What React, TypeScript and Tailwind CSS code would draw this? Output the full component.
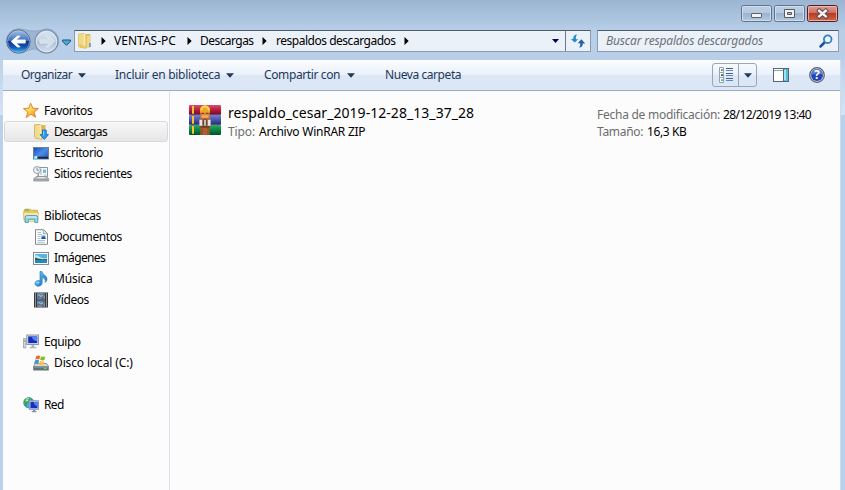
import type { ReactNode } from "react";

type IconProps = { className?: string };

function BackButton() {
  return (
    <svg width="68" height="26" viewBox="0 0 68 26" className="shrink-0">
      <defs>
        <linearGradient id="back" x1="0" y1="0" x2="0" y2="1">
          <stop offset="0" stopColor="#a9c2e6" />
          <stop offset="0.46" stopColor="#3f70bd" />
          <stop offset="0.5" stopColor="#0c3891" />
          <stop offset="0.75" stopColor="#1555b4" />
          <stop offset="1" stopColor="#38c6f4" />
        </linearGradient>
        <linearGradient id="fwd" x1="0" y1="0" x2="0" y2="1">
          <stop offset="0" stopColor="#dbe5f0" />
          <stop offset="0.48" stopColor="#c3d2e3" />
          <stop offset="0.52" stopColor="#adc0d6" />
          <stop offset="1" stopColor="#d3e2f1" />
        </linearGradient>
      </defs>
      <path d="M14.5 .8C20 .8 23 3 30 3S41 .8 42.5 .8A12.2 12.2 0 0 1 42.5 25.2C36 25.2 35 21 30 21S21 25.2 14.5 25.2A12.2 12.2 0 0 1 14.5 .8Z" fill="#8ca6c4" fillOpacity=".65" stroke="#8aa3c0" strokeWidth=".8" />
      <circle cx="14.5" cy="13.5" r="11.6" fill="url(#back)" stroke="#4b628b" strokeWidth="1" />
      <circle cx="14.5" cy="13.5" r="10.9" fill="none" stroke="#d3e3f5" strokeWidth=".6" opacity=".7" />
      <path d="M7.2 13.5L13.3 8H16.2L12.4 11.9H21.3V15.1H12.4L16.2 19H13.3Z" fill="#fff" stroke="#fff" strokeWidth=".7" />
      <circle cx="42.5" cy="13.5" r="11.4" fill="url(#fwd)" stroke="#7f93aa" strokeWidth="1.3" />
      <circle cx="42.5" cy="13.5" r="10.3" fill="none" stroke="#e8f0f8" strokeWidth=".7" />
      <path d="M50.5 13.5L44.5 7.8H41.5L45.5 11.8H36V15.2H45.5L41.5 19.2H44.5Z" fill="#d3dfeb" stroke="#e3ebf3" strokeWidth=".6" />
      <path d="M58.5 12H66.5V13.3L62.5 17.3L58.5 13.3Z" fill="#49acd8" stroke="#254e78" strokeWidth="1" />
    </svg>
  );
}

function FolderIcon({ className }: IconProps) {
  return (
    <svg width="16" height="16" viewBox="0 0 16 16" className={className}>
      <path d="M7 1.5H13V14H7Z" fill="#e4bb4e" stroke="#c99f38" strokeWidth=".5" />
      <path d="M9.5 3L13.7 2.3V13.5L9.5 15Z" fill="#f1d888" />
      <path d="M12 10H13.8V14H12Z" fill="#67a4c6" />
      <path d="M1.5 1L7.5 .5L9.2 2V15.5L3.2 14.4L1.5 13.4Z" fill="#f0da85" stroke="#d7b650" strokeWidth=".6" />
      <path d="M7.3 .8V14.6" stroke="#fff5ca" />
      <path d="M2 11L8.8 13V15.2L3.2 14.2Z" fill="#e1b749" opacity=".55" />
    </svg>
  );
}

function DownloadsIcon() {
  return (
    <svg width="16" height="16" viewBox="0 0 16 16">
      <path d="M6 1H12.5V14H6Z" fill="#e0b84d" />
      <path d="M1.5 .7L7 .4L9 2V15.5L2.8 14.2L1.5 13Z" fill="#f0dc8d" stroke="#c9a545" strokeWidth=".7" />
      <path d="M7.2 1V14.5" stroke="#fff4c5" />
      <path d="M9.5 6H13.2V10.6H15.5L11.3 15.4L7 10.6H9.5Z" fill="#2d9bea" stroke="#186fbd" strokeWidth=".9" />
      <path d="M10.6 7V11.5" fill="none" stroke="#86d1fb" />
    </svg>
  );
}

function StarIcon() {
  return (
    <svg width="16" height="16" viewBox="0 0 16 16">
      <defs>
        <linearGradient id="star" x1="0" y1="0" x2="0.8" y2="1">
          <stop offset="0" stopColor="#fffbd0" />
          <stop offset=".5" stopColor="#ffd557" />
          <stop offset="1" stopColor="#f48a19" />
        </linearGradient>
      </defs>
      <path d="M7.6 .2L9.8 5.2L15.4 5.5L11 9.1L12.7 14.2L8 11.2L3.2 14.6L4.8 9L.4 5.6L5.7 5.3Z" fill="url(#star)" stroke="#df7b20" strokeWidth=".9" strokeLinejoin="round" />
    </svg>
  );
}

function DesktopIcon() {
  return (
    <svg width="16" height="16" viewBox="0 0 16 16">
      <defs>
        <linearGradient id="desk" x1="0" y1="0" x2="1" y2="1">
          <stop offset="0" stopColor="#1647b9" />
          <stop offset=".5" stopColor="#4c8de9" />
          <stop offset="1" stopColor="#1c4dba" />
        </linearGradient>
      </defs>
      <rect x=".5" y="2.5" width="15" height="11.5" fill="url(#desk)" stroke="#6c7f96" />
      <path d="M1 11.8H15V13.6H1Z" fill="#15233f" />
      <path d="M1 11H4.5V14H1Z" fill="#65d6f5" />
      <path d="M2 12.2H4" stroke="#fff" />
    </svg>
  );
}

function RecentIcon() {
  return (
    <svg width="16" height="16" viewBox="0 0 16 16">
      <path d="M5 1.5H14.5V11H5Z" fill="#f6f8f9" stroke="#8d979d" />
      <path d="M6 4H9M7 6H9M7 8H9M11 9H13.5" stroke="#a6b4c0" />
      <path d="M10 3.6H13V7H10Z" fill="#6fbfe0" />
      <path d="M5.5 7V12" stroke="#8d979d" />
      <path d="M3.5 10.5H12.5L15.5 12.5V15H.8V12.5Z" fill="#b4b9bc" stroke="#808689" strokeWidth=".7" />
      <path d="M4.5 11.7H12.2" stroke="#f1f3f4" />
      <path d="M1.5 13.7H15" stroke="#8d9397" strokeWidth=".8" />
      <circle cx="4" cy="4" r="3.5" fill="#eef2f4" stroke="#8d9497" strokeWidth=".9" />
      <path d="M4 1.8V4.3H6" fill="none" stroke="#627e89" strokeWidth=".8" />
    </svg>
  );
}

function LibraryIcon() {
  return (
    <svg width="16" height="16" viewBox="0 0 16 16">
      <path d="M1 2.5L2 1.2H7L8.2 2.2H14.5V12H1Z" fill="#e7c65b" stroke="#c89f39" strokeWidth=".7" />
      <path d="M1.8 2.2H6" stroke="#60b655" strokeWidth="1.2" />
      <path d="M.5 4.5H15.5L14.6 13.5H1.4Z" fill="#f8e79d" stroke="#d7b755" strokeWidth=".6" />
      <path d="M2.2 14.5V9.2Q2.2 7.5 4.2 7.5H12.5Q14.8 7.5 14.8 9.2V14.5H11.8V11.3H5.3V14.5Z" fill="#92d7f1" stroke="#448fb9" strokeWidth=".8" />
      <path d="M3.5 9H13.5" stroke="#d9f5fd" />
    </svg>
  );
}

function DocumentIcon() {
  return (
    <svg width="16" height="16" viewBox="0 0 16 16">
      <path d="M2.5 .7H10.5L14.5 4.5V15.3H2.5Z" fill="#fff" stroke="#808992" />
      <path d="M10.2 1V4.8H14" fill="#d9e0e6" stroke="#8b959e" strokeWidth=".8" />
      <path d="M4.5 3.5H8M4.5 5.5H9M4.5 7.5H7.5M4.5 9.5H7.5M4.5 11.5H12M4.5 13.3H12" stroke="#a3b6cb" strokeWidth=".9" />
      <path d="M8.5 6.5H12.5V10H8.5Z" fill="#4d9ad2" />
      <path d="M8.5 9L10.5 7.5L12.5 9V10H8.5Z" fill="#234f91" />
    </svg>
  );
}

function PicturesIcon() {
  return (
    <svg width="16" height="16" viewBox="0 0 16 16">
      <rect x=".5" y="2.5" width="15" height="12" fill="#fff" stroke="#858d92" />
      <path d="M2 4H14V13H2Z" fill="#55b5e2" />
      <path d="M2 5Q5 5 7 7T14 8V10H2Z" fill="#bde7ef" />
      <path d="M2 7.4L5 8.6L9 9.2L14 9V10.5H2Z" fill="#215e56" />
      <path d="M2 10.3H14V13H2Z" fill="#2689bd" />
    </svg>
  );
}

function MusicIcon() {
  return (
    <svg width="16" height="16" viewBox="0 0 16 16">
      <defs>
        <linearGradient id="note" x1="0" y1="0" x2="1" y2="1">
          <stop offset="0" stopColor="#7dccf6" />
          <stop offset="1" stopColor="#0c6abc" />
        </linearGradient>
      </defs>
      <path d="M7 .5H8.9C9 3.3 14 4.3 14 8C14 9.5 13.3 10.5 12.2 11.5C13 8 11 7 9.2 6.5V12C9 14.5 6.8 15.4 4.8 15.2C2.7 15 1.5 13.5 2.1 11.8C2.7 9.7 5.3 9 7 9.8Z" fill="url(#note)" stroke="#1b78be" strokeWidth=".6" />
      <ellipse cx="4.7" cy="11.6" rx="1.8" ry="1.1" fill="#b4e4fb" opacity=".75" />
    </svg>
  );
}

function VideoIcon() {
  return (
    <svg width="16" height="16" viewBox="0 0 16 16">
      <path d="M1 .5H15V15.5H1Z" fill="#343434" />
      <path d="M4 1H12V7.5H4ZM4 8.5H12V15H4Z" fill="#4d9cd8" />
      <path d="M4 1H6L8 3L10 1.5L12 1V3L10 5L12 7.5H9L7 5.5L4 7.5V5L5.5 4ZM4 8.5H6L8 10.5L10 9L12 8.5V10.5L10 12.5L12 15H9L7 13L4 15V12.5L5.5 11.5Z" fill="#87584f" opacity=".8" />
      <path d="M5.5 2.5L8 4.5L10 3M5.5 10L8 12L10 10.5" fill="none" stroke="#79c7ec" strokeWidth="1.2" />
      <path d="M2.5 1.5V15M13.5 1.5V15" stroke="#f4f4f4" strokeWidth="1.1" strokeDasharray="1 1" />
    </svg>
  );
}

function ComputerIcon() {
  return (
    <svg width="16" height="16" viewBox="0 0 16 16">
      <path d="M.5 4.5H2.8V14H.5Z" fill="#d4d8da" stroke="#8e969b" strokeWidth=".7" />
      <path d="M.8 7H2.5" stroke="#56c53b" strokeWidth="1.2" />
      <rect x="3.8" y="1" width="11.7" height="9.5" fill="#d6dde5" stroke="#8797aa" />
      <path d="M5.2 2.4H14.2V9.1H5.2Z" fill="#172ebc" />
      <path d="M9 2.4H14.2V7C11.7 7 9 5.2 9 2.4Z" fill="#5386ed" />
      <path d="M8.5 11H11.3V13H8.5ZM6.5 13H13.5V14.3H6.5Z" fill="#aeb6bd" />
    </svg>
  );
}

function DriveIcon() {
  return (
    <svg width="16" height="16" viewBox="0 0 16 16">
      <path d="M2.5 8.5H13.5L15.5 11V15.2H.5V11Z" fill="#d1d7d9" stroke="#727b80" strokeWidth=".7" />
      <path d="M.8 11.2H15.2V15H.8Z" fill="#647179" />
      <path d="M1.4 12H14.6" stroke="#93a1a6" />
      <path d="M11 13.4H13.5" stroke="#68de52" strokeWidth="1.2" />
      <path d="M3.2 1.3Q5.3-.3 7.2 1L6.3 4.6Q4.3 3.4 2.2 4.8Z" fill="#ee6a26" />
      <path d="M8 1.2Q10 2.4 12.3 1.4L11.5 5Q9.4 6 7.2 4.8Z" fill="#80bd35" />
      <path d="M2 5.6Q4 4.2 6.1 5.4L5.2 9Q3.4 7.8 1.1 9.1Z" fill="#3e91d6" />
      <path d="M7 5.7Q9 7 11.2 5.9L10.4 9.5Q8.2 10.5 6.1 9.2Z" fill="#f9c333" />
    </svg>
  );
}

function NetworkIcon() {
  return (
    <svg width="16" height="16" viewBox="0 0 16 16">
      <circle cx="5.8" cy="5.7" r="5.2" fill="#43a8df" stroke="#287ba7" strokeWidth=".6" />
      <path d="M1 4.5Q2.5.8 6 .6L7.5 2L5.5 3.2L6.2 5L3.8 6.5L4 9.8Q1 8.3 1 4.5ZM7.8 1.1Q10.5 2.4 10.8 5L8 4Z" fill="#39a847" />
      <path d="M3 2.2L6 1.5M2.5 4L5 3.4" stroke="#c4f3a0" strokeWidth="1.2" />
      <rect x="6.3" y="3.8" width="9.2" height="8.5" fill="#cfdaeb" stroke="#8495b7" />
      <path d="M7.4 4.9H14.5V11.2H7.4Z" fill="#1630bb" />
      <path d="M10.8 4.9H14.5V9C12.2 9 10.8 7.5 10.8 4.9Z" fill="#527ee9" />
      <path d="M10 12.5H12.3V14H10ZM8.7 14H13.5V15.3H8.7Z" fill="#7e95b8" />
    </svg>
  );
}

function ArchiveIcon() {
  return (
    <svg width="32" height="32" viewBox="0 0 32 32" className="shrink-0">
      <defs>
        <linearGradient id="red" x1="0" y1="0" x2="0" y2="1"><stop stopColor="#d9506f" /><stop offset=".5" stopColor="#b81a3c" /><stop offset="1" stopColor="#680b24" /></linearGradient>
        <linearGradient id="blue" x1="0" y1="0" x2="0" y2="1"><stop stopColor="#7280d5" /><stop offset=".5" stopColor="#4851ae" /><stop offset="1" stopColor="#292760" /></linearGradient>
        <linearGradient id="green" x1="0" y1="0" x2="0" y2="1"><stop stopColor="#2caa68" /><stop offset=".5" stopColor="#0c8143" /><stop offset="1" stopColor="#054d2c" /></linearGradient>
      </defs>
      <rect x="0" y="1" width="32" height="10" rx="1" fill="url(#red)" />
      <rect x="0" y="11" width="32" height="10" rx="1" fill="url(#blue)" />
      <rect x="0" y="21" width="32" height="10" rx="1" fill="url(#green)" />
      <path d="M1 10.7H31M1 20.7H31" stroke="#8d7484" strokeWidth=".6" />
      <path d="M3 2H5V9.8H3ZM3 12H5V19.8H3ZM3 22H5V29.8H3Z" fill="#f5c52d" />
      <path d="M11 7Q11 2 16 1.2Q21 2 21 7V9H11Z" fill="#efa528" />
      <path d="M12 6.5Q12 3 16 2.2Q20 3 20 6.5" fill="none" stroke="#ffd94c" strokeWidth="2" />
      <path d="M11.5 8H20.5V15.5H11.5Z" fill="#e08a38" />
      <path d="M12.5 9.5H15M17 9.5H19.5" stroke="#6b4322" strokeWidth="1.1" />
      <path d="M13 11.5H19V13.5H13Z" fill="#f2ae62" />
      <path d="M11.5 14.5H20.5V17H11.5Z" fill="#9a4a22" />
      <path d="M10.2 15.5H13.6V22H10.2ZM18.4 15.5H21.8V22H18.4Z" fill="#e9e6e1" stroke="#6f6970" strokeWidth=".5" />
      <path d="M13.8 16H15.3V21.5H13.8ZM16.7 16H18.2V21.5H16.7Z" fill="#8b3b20" />
      <path d="M15.3 16H16.7V21.5H15.3Z" fill="#f2efe9" />
      <path d="M11.5 22H20.5V31H11.5Z" fill="#b0602f" />
      <path d="M11.5 22H20.5V23.8H11.5Z" fill="#7c3a1c" />
      <path d="M13 24V31M19 24V31" stroke="#8d451e" />
    </svg>
  );
}

function WindowButton({ kind }: { kind: "min" | "max" | "close" }) {
  const close = kind === "close";
  return (
    <svg width="31" height="17" viewBox="0 0 31 17">
      <defs>
        <linearGradient id={`button-${kind}`} x1="0" y1="0" x2="0" y2="1">
          <stop offset="0" stopColor={close ? "#dfa198" : "#bdcfe2"} />
          <stop offset=".45" stopColor={close ? "#cd7162" : "#b5c9df"} />
          <stop offset=".5" stopColor={close ? "#b73b24" : "#9bb3cf"} />
          <stop offset="1" stopColor={close ? "#cf6a4a" : "#b4cbe3"} />
        </linearGradient>
      </defs>
      <rect x=".5" y=".5" width="30" height="16" rx="2" fill={`url(#button-${kind})`} stroke={close ? "#581a22" : "#5e738e"} />
      <rect x="1.5" y="1.5" width="28" height="14" rx="1" fill="none" stroke={close ? "#edc0b5" : "#d5e3f1"} strokeWidth=".8" />
      {kind === "min" && <rect x="10.5" y="8.5" width="10" height="4" rx=".5" fill="#f3f3f3" stroke="#5d636d" />}
      {kind === "max" && <path d="M10.5 4.5H20.5V12.5H10.5ZM13.5 7.5H17.5V9.5H13.5Z" fillRule="evenodd" fill="#f3f3f3" stroke="#555c68" />}
      {close && <g strokeWidth="2.4"><path d="M12.2 5.8L18.8 11.4M18.8 5.8L12.2 11.4" stroke="#5c4b53" strokeWidth="4.4" strokeLinecap="square" /><path d="M12.2 5.8L18.8 11.4M18.8 5.8L12.2 11.4" stroke="#f6f6f6" strokeLinecap="square" /></g>}
    </svg>
  );
}

function Chevron() {
  return <svg width="5" height="8" viewBox="0 0 5 8" className="shrink-0"><path d="M.5 0L4.7 4L.5 8Z" fill="#000" /></svg>;
}

function Down({ className = "" }: IconProps) {
  return <svg width="8" height="5" viewBox="0 0 8 5" className={`shrink-0 ${className}`}><path d="M0 .3H8L4 4.8Z" fill="#1e395b" /></svg>;
}

function FrameEdge({ className }: { className: string }) {
  return (
    <div className={`flex shrink-0 flex-col ${className}`}>
      <div className="h-[55px] bg-linear-to-b from-[#bbd1ea] to-[#d6e4f4]" />
      <div className="flex-1 bg-[#b9d1eb]" />
    </div>
  );
}

function NavRow({ icon, children, child = false, selected = false, tracking = "" }: { icon: ReactNode; children: ReactNode; child?: boolean; selected?: boolean; tracking?: string }) {
  return (
    <div className={`ml-px mr-px flex h-[21px] shrink-0 items-center gap-[5px] rounded-[3px] border whitespace-nowrap ${child ? "pl-7" : "pl-[18px]"} ${selected ? "border-[#d9d9d9] bg-linear-to-b from-[#f8f8f8] to-[#e6e6e6]" : "border-transparent"}`}>
      {icon}
      <span className={tracking}>{children}</span>
    </div>
  );
}

export default function App() {
  return (
    <div className="flex h-[490px] w-[845px] flex-col overflow-hidden bg-[#bbd1ea] font-['Noto_Sans',sans-serif] text-[12px] leading-[16px] text-black">
      <div className="flex h-[60px] shrink-0 flex-col bg-linear-to-b from-[#9bb5d2] via-[#b6cee7] to-[#b9cfe9]">
        <div className="flex h-7 shrink-0 justify-end gap-[2px] pt-[5px] pr-[7px]">
          <WindowButton kind="min" />
          <WindowButton kind="max" />
          <WindowButton kind="close" />
        </div>
        <div className="flex h-[26px] items-center pl-1">
          <BackButton />
          <div className="ml-[2px] flex h-[22px] w-[517px] shrink-0 items-center rounded-[1px] border border-[#8d9bac] border-t-[#4f5b6b] bg-[#eaf1f9] whitespace-nowrap">
            <FolderIcon className="ml-[2px] shrink-0" />
            <div className="ml-[8px] flex items-center">
              <Chevron />
              <span className="ml-[8px] w-[65px] tracking-[0.02px]">VENTAS-PC</span>
              <span className="ml-[8px]"><Chevron /></span>
              <span className="ml-[8px] w-[54px] tracking-[-0.55px]">Descargas</span>
              <span className="ml-[8px]"><Chevron /></span>
              <span className="ml-[9px] w-[119px] tracking-[-0.48px]">respaldos descargados</span>
              <span className="ml-[9px]"><Chevron /></span>
            </div>
            <svg width="7" height="4" viewBox="0 0 7 4" className="mr-[6px] ml-auto"><path d="M0 0H7L3.5 4Z" fill="#00005a" /></svg>
            <div className="flex h-full w-[25px] items-center justify-center border-l border-[#6f7b89]">
              <svg width="16" height="16" viewBox="0 0 16 16">
                <path d="M7 1.5Q3.2 1.7 3.2 6H.8L4.7 9.6L8.3 6.2H6Q5.4 3.4 7 1.5Z" fill="#2588c9" />
                <path d="M9 14.6Q12.8 14.4 12.8 10.4H15.2L11.4 6.3L7.7 10.2H10.2Q10.6 12.8 9 14.6Z" fill="#2662ab" />
              </svg>
            </div>
          </div>
          <div className="ml-[6px] flex h-[22px] w-[242px] shrink-0 items-center rounded-[1px] border border-[#8d9bac] border-t-[#4f5b6b] bg-[#eaf1f9] pl-2 text-[#6d7278]">
            <span className="whitespace-nowrap tracking-[-0.17px] italic">Buscar respaldos descargados</span>
            <svg width="14" height="14" viewBox="0 0 14 14" className="mr-[5px] ml-auto">
              <path d="M1.5 12.5L6 8" stroke="#234f9d" strokeWidth="2.5" strokeLinecap="round" />
              <circle cx="8.7" cy="5.2" r="3.8" fill="#edf6fc" stroke="#3181c9" strokeWidth="1.8" />
            </svg>
          </div>
        </div>
      </div>

      <div className="flex min-h-0 flex-1">
        <FrameEdge className="w-[3px]" />
        <div className="flex min-w-0 flex-1 flex-col">
          <div className="flex h-[31px] shrink-0 items-center border-b border-[#9cabc6] bg-[linear-gradient(to_bottom,#fbfdff_0%,#eaf1fa_50%,#dce6f4_52%,#dce7f5_100%)] pl-[18px] whitespace-nowrap text-[#1e395b]">
            <div className="flex w-[94px] items-center"><span className="w-[57px] tracking-[-0.55px]">Organizar</span><Down /></div>
            <div className="flex w-[149px] items-center"><span className="w-[111px] tracking-[-0.28px]">Incluir en biblioteca</span><Down /></div>
            <div className="flex w-[121px] items-center"><span className="w-[83px] tracking-[-0.38px]">Compartir con</span><Down /></div>
            <span className="tracking-[-0.43px]">Nueva carpeta</span>
            <div className="ml-auto flex h-6 w-[45px] rounded-[3px] border border-[#98a6b8]">
              <div className="flex w-[26px] items-center justify-center border-r border-[#98a6b8]">
                <svg width="16" height="16" viewBox="0 0 16 16">
                  <path d="M1.5 .5H5.5V5.5H1.5ZM1.5 5.5H5.5V10.5H1.5ZM1.5 10.5H5.5V15.5H1.5Z" fill="#fff" stroke="#98a1aa" />
                  <path d="M3 2.3H4.8V4H3Z" fill="#259c81" /><path d="M3 7.3H4.8V9H3Z" fill="#29416f" /><path d="M3 12.3H4.8V14H3Z" fill="#36b690" />
                  <path d="M8 1.5H15M8 6.5H15M8 11.5H15" stroke="#4e5e7a" /><path d="M8 3.5H15M8 8.5H15M8 13.5H15" stroke="#5687df" />
                </svg>
              </div>
              <div className="flex flex-1 items-center justify-center"><Down /></div>
            </div>
            <svg width="16" height="14" viewBox="0 0 16 14" className="ml-4">
              <rect x=".5" y=".5" width="15" height="13" fill="#fff" stroke="#50677c" />
              <path d="M1 2.5H10" stroke="#8fa4b5" /><path d="M10 1H15V13H10Z" fill="#55bcd5" /><path d="M11 2H13V12H11Z" fill="#a2e2ec" /><path d="M10.5 1V13" stroke="#50677c" />
            </svg>
            <svg width="16" height="16" viewBox="0 0 16 16" className="mr-[15px] ml-5">
              <circle cx="8" cy="8" r="7.3" fill="#d6dbe3" stroke="#596071" strokeWidth="1.2" />
              <circle cx="8" cy="8" r="6" fill="#2445b8" />
              <path d="M2 8A6 6 0 0 1 14 8Q8 5 2 8Z" fill="#5b81d2" />
              <text x="8" y="12.1" textAnchor="middle" fontFamily="Noto Sans, sans-serif" fontSize="11.5" fontWeight="700" fill="#fff">?</text>
            </svg>
          </div>

          <div className="flex min-h-0 flex-1 bg-[#fcfcfc]">
            <nav className="flex w-[167px] shrink-0 flex-col border-r border-[#d9e3f1] pt-[9px]">
              <NavRow icon={<StarIcon />} tracking="tracking-[-0.38px]">Favoritos</NavRow>
              <NavRow icon={<DownloadsIcon />} child selected tracking="tracking-[-0.6px]">Descargas</NavRow>
              <NavRow icon={<DesktopIcon />} child tracking="tracking-[-0.42px]">Escritorio</NavRow>
              <NavRow icon={<RecentIcon />} child tracking="tracking-[-0.42px]">Sitios recientes</NavRow>
              <div className="h-[21px]" />
              <NavRow icon={<LibraryIcon />} tracking="tracking-[-0.38px]">Bibliotecas</NavRow>
              <NavRow icon={<DocumentIcon />} child tracking="tracking-[-0.4px]">Documentos</NavRow>
              <NavRow icon={<PicturesIcon />} child tracking="tracking-[-0.62px]">Imágenes</NavRow>
              <NavRow icon={<MusicIcon />} child tracking="tracking-[-0.2px]">Música</NavRow>
              <NavRow icon={<VideoIcon />} child tracking="tracking-[-0.42px]">Vídeos</NavRow>
              <div className="h-[21px]" />
              <NavRow icon={<ComputerIcon />} tracking="tracking-[-0.42px]">Equipo</NavRow>
              <NavRow icon={<DriveIcon />} child tracking="tracking-[-0.13px]">Disco local (C:)</NavRow>
              <div className="h-[21px]" />
              <NavRow icon={<NetworkIcon />} tracking="tracking-[-0.6px]">Red</NavRow>
            </nav>
            <main className="flex h-[60px] min-w-0 flex-1 pt-[13px] pl-[19px] whitespace-nowrap">
              <ArchiveIcon />
              <div className="ml-[7px] w-[369px] shrink-0">
                <div className="-mt-[1px] h-[21px] text-[14px] leading-[20px] tracking-[0.05px]">respaldo_cesar_2019-12-28_13_37_28</div>
                <div className="flex"><span className="w-[31px] tracking-[-0.1px] text-[#6d6d6d]">Tipo:</span><span className="tracking-[-0.24px]">Archivo WinRAR ZIP</span></div>
              </div>
              <div className="pt-[2px] leading-[17px]">
                <div className="flex"><span className="w-[126px] tracking-[-0.26px] text-[#6d6d6d]">Fecha de modificación:</span><span className="tracking-[-0.6px]">28/12/2019 13:40</span></div>
                <div className="flex"><span className="w-[50px] tracking-[-0.3px] text-[#6d6d6d]">Tamaño:</span><span className="tracking-[-0.4px]">16,3 KB</span></div>
              </div>
            </main>
          </div>
        </div>
        <FrameEdge className="w-[5px] border-l border-[#c9dcf0]" />
      </div>
    </div>
  );
}
